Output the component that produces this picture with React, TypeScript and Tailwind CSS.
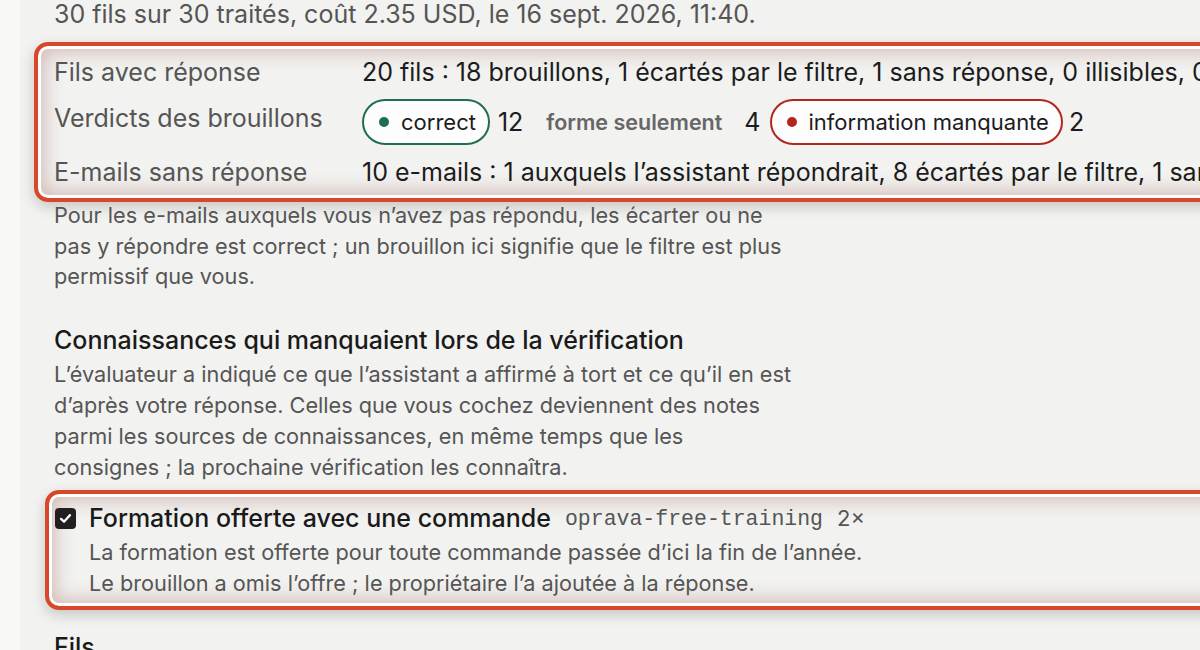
import React from "react";

const boxShadow =
  "shadow-[inset_0_0_0_3px_#ffffff,inset_0_0_18px_7px_rgba(150,80,70,0.32),0_5px_14px_rgba(0,0,0,0.18)]";

function Chip({ color, label }: { color: "green" | "red"; label: string }) {
  const border = color === "green" ? "border-[#1f6e4f]" : "border-[#b3261e]";
  const dot = color === "green" ? "bg-[#1f6e4f]" : "bg-[#b3261e]";
  return (
    <span
      className={`inline-flex h-[46px] items-center gap-[12px] rounded-full border-2 ${border} bg-[#fdfdfd] pl-[15px] pr-[12px] text-[22px] text-[#1c1c1c]`}
    >
      <span className={`h-[10px] w-[10px] rounded-full ${dot}`} />
      <span>{label}</span>
    </span>
  );
}

export default function App() {
  return (
    <div
      className="flex h-[650px] w-[1200px] overflow-hidden bg-[#f2f2f0] text-[25px] text-[#555]"
      style={{ fontFamily: "Inter, 'Noto Sans', sans-serif" }}
    >
      <div className="w-[20px] shrink-0 bg-[#f8f8f7]" />
      <div className="min-w-0 flex-1 pl-[34px]">
        <p className="mt-[-1px] whitespace-nowrap leading-[31px]">
          30 fils sur 30 traités, coût 2.35 USD, le 16 sept. 2026, 11:40.
        </p>

        <div
          className={`-ml-[20px] mt-[12px] w-[1300px] rounded-[14px] border-4 border-[#d9472b] ${boxShadow} py-[1px] pl-[16px]`}
        >
          <div className="flex h-[50px] items-center leading-[31px]">
            <div className="w-[308px] shrink-0">Fils avec réponse</div>
            <div className="whitespace-nowrap text-[#1c1c1c]">
              20 fils : 18 brouillons, 1 écartés par le filtre, 1 sans réponse, 0 illisibles, 0 en erreur.
            </div>
          </div>
          <div className="flex h-[50px] items-center leading-[31px]">
            <div className="w-[308px] shrink-0 self-start pt-[6px]">Verdicts des brouillons</div>
            <div className="flex items-center whitespace-nowrap text-[#1c1c1c]">
              <Chip color="green" label="correct" />
              <span className="ml-[8px]">12</span>
              <span className="ml-[23px] text-[21.5px] font-semibold text-[#666]">forme seulement</span>
              <span className="ml-[22px]">4</span>
              <span className="ml-[9px] flex">
                <Chip color="red" label="information manquante" />
              </span>
              <span className="ml-[6px]">2</span>
            </div>
          </div>
          <div className="flex h-[50px] items-center leading-[31px]">
            <div className="w-[308px] shrink-0">E-mails sans réponse</div>
            <div className="whitespace-nowrap text-[#1c1c1c]">
              10 e-mails : 1 auxquels l’assistant répondrait, 8 écartés par le filtre, 1 sans réponse.
            </div>
          </div>
        </div>

        <p className="mt-[-2px] whitespace-nowrap text-[21.7px] leading-[30.5px]">
          Pour les e-mails auxquels vous n’avez pas répondu, les écarter ou ne
          <br />
          pas y répondre est correct ; un brouillon ici signifie que le filtre est plus
          <br />
          permissif que vous.
        </p>

        <h2 className="mt-[32px] font-medium leading-[32px] text-[#1a1a1a]">
          Connaissances qui manquaient lors de la vérification
        </h2>
        <p className="mt-[3px] whitespace-nowrap text-[21.7px] leading-[31.3px]">
          L’évaluateur a indiqué ce que l’assistant a affirmé à tort et ce qu’il en est
          <br />
          d’après votre réponse. Celles que vous cochez deviennent des notes
          <br />
          parmi les sources de connaissances, en même temps que les
          <br />
          consignes ; la prochaine vérification les connaîtra.
        </p>

        <div
          className={`-ml-[9px] mt-[6px] w-[1300px] rounded-[14px] border-4 border-[#d9472b] ${boxShadow} pb-[7px] pl-[6px] pt-[8px]`}
        >
          <div className="flex h-[34px] items-center">
            <span className="flex h-[21px] w-[21px] shrink-0 items-center justify-center rounded-[4px] bg-[#231f20]">
              <svg viewBox="0 0 16 16" className="h-[15px] w-[15px]">
                <path d="M3.2 8.4 6.4 11.4 12.8 4.4" fill="none" stroke="#fff" strokeWidth="2.4" strokeLinecap="round" strokeLinejoin="round" />
              </svg>
            </span>
            <span className="ml-[13px] font-medium text-[#1a1a1a]">Formation offerte avec une commande</span>
            <span className="ml-[14px] text-[21.5px] text-[#555]" style={{ fontFamily: "'Liberation Mono', monospace" }}>
              oprava-free-training
            </span>
            <span className="ml-[14px] text-[22px] text-[#555]">2×</span>
          </div>
          <div className="mt-[1px] pl-[34px] text-[21.7px] leading-[31px]">
            <div>La formation est offerte pour toute commande passée d’ici la fin de l’année.</div>
            <div>Le brouillon a omis l’offre ; le propriétaire l’a ajoutée à la réponse.</div>
          </div>
        </div>

        <h2 className="mt-[21px] font-medium leading-[32px] text-[#1a1a1a]">Fils</h2>
      </div>
    </div>
  );
}
